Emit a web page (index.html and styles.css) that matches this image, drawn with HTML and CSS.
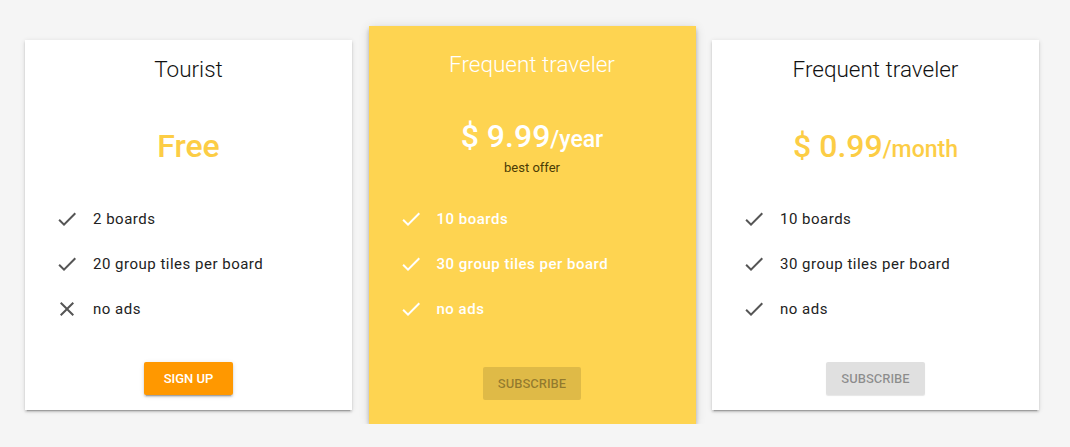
FILE: index.html
```html
<!DOCTYPE html>
<html>
<head>
<meta charset="utf-8">
<link rel="stylesheet" href="styles.css">
</head>
<body>
<div class="plans">
  <section class="card">
    <h2 class="title">Tourist</h2>
    <div class="price">Free</div>
    <ul class="features">
      <li><svg class="ico" viewBox="0 0 24 24"><path d="M9 16.17L4.83 12l-1.42 1.41L9 19 21 7l-1.41-1.41z"/></svg><span>2 boards</span></li>
      <li><svg class="ico" viewBox="0 0 24 24"><path d="M9 16.17L4.83 12l-1.42 1.41L9 19 21 7l-1.41-1.41z"/></svg><span>20 group tiles per board</span></li>
      <li><svg class="ico" viewBox="0 0 24 24"><path d="M19 6.41L17.59 5 12 10.59 6.41 5 5 6.41 10.59 12 5 17.59 6.41 19 12 13.41 17.59 19 19 17.59 13.41 12z"/></svg><span>no ads</span></li>
    </ul>
    <button class="btn btn-primary">Sign up</button>
  </section>
  <section class="card card-featured">
    <h2 class="title">Frequent traveler</h2>
    <div class="price">$ 9.99<span class="per">/year</span></div>
    <div class="note">best offer</div>
    <ul class="features">
      <li><svg class="ico" viewBox="0 0 24 24"><path d="M9 16.17L4.83 12l-1.42 1.41L9 19 21 7l-1.41-1.41z"/></svg><span>10 boards</span></li>
      <li><svg class="ico" viewBox="0 0 24 24"><path d="M9 16.17L4.83 12l-1.42 1.41L9 19 21 7l-1.41-1.41z"/></svg><span>30 group tiles per board</span></li>
      <li><svg class="ico" viewBox="0 0 24 24"><path d="M9 16.17L4.83 12l-1.42 1.41L9 19 21 7l-1.41-1.41z"/></svg><span>no ads</span></li>
    </ul>
    <button class="btn btn-disabled">Subscribe</button>
  </section>
  <section class="card">
    <h2 class="title">Frequent traveler</h2>
    <div class="price">$ 0.99<span class="per">/month</span></div>
    <ul class="features">
      <li><svg class="ico" viewBox="0 0 24 24"><path d="M9 16.17L4.83 12l-1.42 1.41L9 19 21 7l-1.41-1.41z"/></svg><span>10 boards</span></li>
      <li><svg class="ico" viewBox="0 0 24 24"><path d="M9 16.17L4.83 12l-1.42 1.41L9 19 21 7l-1.41-1.41z"/></svg><span>30 group tiles per board</span></li>
      <li><svg class="ico" viewBox="0 0 24 24"><path d="M9 16.17L4.83 12l-1.42 1.41L9 19 21 7l-1.41-1.41z"/></svg><span>no ads</span></li>
    </ul>
    <button class="btn btn-disabled">Subscribe</button>
  </section>
</div>
</body>
</html>
```

FILE: styles.css
```css
html, body {
  margin: 0;
  padding: 0;
  background: #f5f5f5;
  font-family: Roboto, "Liberation Sans", sans-serif;
}

.plans {
  display: flex;
  align-items: flex-start;
  gap: 16.5px;
  padding: 26px 0 0 25px;
}

.card {
  width: 327px;
  height: 370px;
  margin-top: 14px;
  flex: none;
  background: #fff;
  display: flex;
  flex-direction: column;
  align-items: center;
  padding: 13px 0 15px;
  box-sizing: border-box;
  box-shadow: 0 2px 2px 0 rgba(0,0,0,.14), 0 3px 1px -2px rgba(0,0,0,.2), 0 1px 5px 0 rgba(0,0,0,.12);
}

.title {
  margin: 0;
  font-size: 22.5px;
  line-height: 32px;
  font-weight: 300;
  color: #111;
}

.price {
  margin-top: 41px;
  height: 40px;
  font-size: 32px;
  line-height: 40px;
  font-weight: 500;
  color: #fccd45;
}

.per {
  font-size: 23px;
  line-height: 1;
}

.features {
  list-style: none;
  margin: 30.5px 0 0;
  padding: 0 0 0 30px;
  align-self: stretch;
}

.features li {
  height: 45px;
  display: flex;
  align-items: center;
  font-size: 15px;
  letter-spacing: 0.5px;
  color: #222;
}

.ico {
  width: 24px;
  height: 24px;
  fill: #555;
  margin-right: 14px;
  flex: none;
}

.btn {
  margin-top: auto;
  height: 33px;
  min-width: 89px;
  padding: 0 15px;
  border: none;
  border-radius: 2px;
  font-family: Roboto, "Liberation Sans", sans-serif;
  font-size: 13px;
  font-weight: 500;
  text-transform: uppercase;
  letter-spacing: 0;
}

.btn-primary {
  background: #ff9800;
  color: #fff;
  box-shadow: 0 2px 2px 0 rgba(0,0,0,.14), 0 3px 1px -2px rgba(0,0,0,.2), 0 1px 5px 0 rgba(0,0,0,.12);
}

.btn-disabled {
  background: rgba(0,0,0,.12);
  color: rgba(0,0,0,.38);
  box-shadow: 0 1px 1px 0 rgba(0,0,0,.1);
}

.card-featured {
  height: 398px;
  margin-top: 0;
  background: #fed451;
  padding: 22px 0 24px;
  box-shadow: 0 4px 5px 0 rgba(0,0,0,.14), 0 1px 10px 0 rgba(0,0,0,.12), 0 2px 4px -1px rgba(0,0,0,.2);
}

.card-featured .title {
  color: #fff;
}

.card-featured .price {
  margin-top: 36px;
  color: #fff;
}

.card-featured .note {
  margin-top: 3px;
  font-size: 13px;
  line-height: 18px;
  color: #4a3b05;
}

.card-featured .features {
  margin-top: 19.5px;
}

.card-featured .features li {
  color: #fff;
  font-weight: 500;
}

.card-featured .ico {
  fill: #fff;
}

.card-featured .btn {
  box-shadow: none;
  color: rgba(0,0,0,.35);
}
```
